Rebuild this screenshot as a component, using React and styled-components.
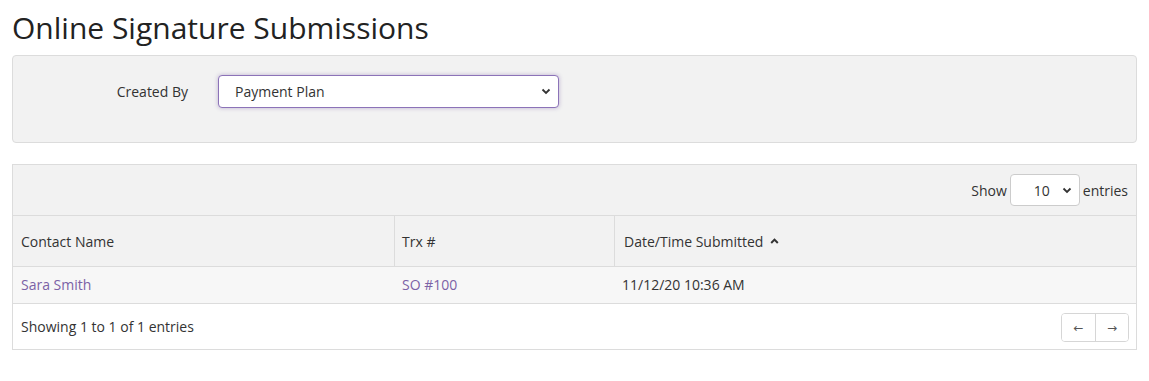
import styled, { createGlobalStyle } from "styled-components";

// Page-wide defaults
const GlobalStyle = createGlobalStyle`
  body {
    margin: 0;
    padding: 0 12px;
    background: #fff;
    font-family: "Open Sans", "Noto Sans", sans-serif;
    font-size: 14px;
    color: #333;
  }
  * { box-sizing: border-box; }
`;

const Title = styled.h1`
  margin: 10px 0 10px;
  font-size: 30px;
  line-height: 35px;
  font-weight: 400;
  color: #222;
`;

// Filter well
const FilterPanel = styled.div`
  background: #f2f2f2;
  border: 1px solid #dcdcdc;
  border-radius: 4px;
  padding: 19px 0 34px;
`;

const FieldRow = styled.div`
  display: flex;
  align-items: center;
`;

const Label = styled.label`
  width: 175px;
  text-align: right;
  margin-right: 30px;
  color: #333;
`;

const Chevron = () => (
  <svg width="10" height="7" viewBox="0 0 10 7">
    <path d="M1.5 1.5 L5 5 L8.5 1.5" fill="none" stroke="#333" strokeWidth="1.8" />
  </svg>
);

const SelectBox = styled.div`
  position: relative;
  width: ${(p) => p.$width}px;
  height: ${(p) => p.$height}px;
  background: #fff;
  border: 1px solid ${(p) => (p.$focused ? "#8c73b8" : "#ccc")};
  border-radius: 4px;
  box-shadow: ${(p) => (p.$focused ? "0 0 4px rgba(124, 98, 168, 0.45)" : "none")};
  display: flex;
  align-items: center;
  justify-content: space-between;
  padding: 0 ${(p) => p.$padRight}px 0 ${(p) => p.$padLeft}px;
  color: #333;
`;

// Data table panel
const TablePanel = styled.div`
  margin-top: 21px;
  border: 1px solid #dcdcdc;
`;

const Toolbar = styled.div`
  height: 51px;
  background: #f2f2f2;
  display: flex;
  align-items: center;
  justify-content: flex-end;
  padding-right: 8px;
  border-bottom: 1px solid #dcdcdc;
  gap: 3px;
`;

const Grid = styled.div`
  display: grid;
  grid-template-columns: 381px 220px 1fr;
`;

const HeadCell = styled.div`
  height: 51px;
  background: #f2f2f2;
  display: flex;
  align-items: center;
  padding-left: ${(p) => p.$pad}px;
  border-left: ${(p) => (p.$first ? "none" : "1px solid #dcdcdc")};
  border-bottom: 1px solid #dcdcdc;
  gap: 7px;
`;

const Cell = styled.div`
  height: 37px;
  background: #f7f7f7;
  display: flex;
  align-items: center;
  padding-left: 8px;
  padding-bottom: 1px;
  border-bottom: 1px solid #dcdcdc;
`;

const Link = styled.a`
  color: #7b62a6;
  text-decoration: none;
`;

const Footer = styled.div`
  height: 45px;
  display: flex;
  align-items: center;
  justify-content: space-between;
  padding: 0 7px 0 8px;
`;

const Pager = styled.div`
  display: flex;
  border: 1px solid #d6d6d6;
  border-radius: 4px;
  overflow: hidden;
  margin-top: 2px;
`;

const PageButton = styled.button`
  width: 33px;
  height: 27px;
  border: none;
  border-left: ${(p) => (p.$first ? "none" : "1px solid #d6d6d6")};
  background: #fff;
  color: #555;
  font-family: "DejaVu Sans", sans-serif;
  font-size: 12px;
  padding: 0;
  display: flex;
  align-items: center;
  justify-content: center;
`;

const SortUp = () => (
  <svg width="9" height="6" viewBox="0 0 9 6">
    <path d="M1.2 5 L4.5 1.6 L7.8 5" fill="none" stroke="#333" strokeWidth="2" />
  </svg>
);

export default function App() {
  return (
    <>
      <GlobalStyle />
      <Title>Online Signature Submissions</Title>

      <FilterPanel>
        <FieldRow>
          <Label>Created By</Label>
          <SelectBox $width={341} $height={33} $padLeft={16} $padRight={7} $focused>
            <span>Payment Plan</span>
            <Chevron />
          </SelectBox>
        </FieldRow>
      </FilterPanel>

      <TablePanel>
        <Toolbar>
          <span>Show</span>
          <SelectBox $width={70} $height={32} $padLeft={23} $padRight={7}>
            <span>10</span>
            <Chevron />
          </SelectBox>
          <span>entries</span>
        </Toolbar>

        <Grid>
          <HeadCell $first $pad={8}>Contact Name</HeadCell>
          <HeadCell $pad={7}>Trx #</HeadCell>
          <HeadCell $pad={9}>
            Date/Time Submitted <SortUp />
          </HeadCell>

          <Cell>
            <Link href="#">Sara Smith</Link>
          </Cell>
          <Cell>
            <Link href="#">SO #100</Link>
          </Cell>
          <Cell>11/12/20 10:36 AM</Cell>
        </Grid>

        <Footer>
          <span>Showing 1 to 1 of 1 entries</span>
          <Pager>
            <PageButton $first>←</PageButton>
            <PageButton>→</PageButton>
          </Pager>
        </Footer>
      </TablePanel>
    </>
  );
}
